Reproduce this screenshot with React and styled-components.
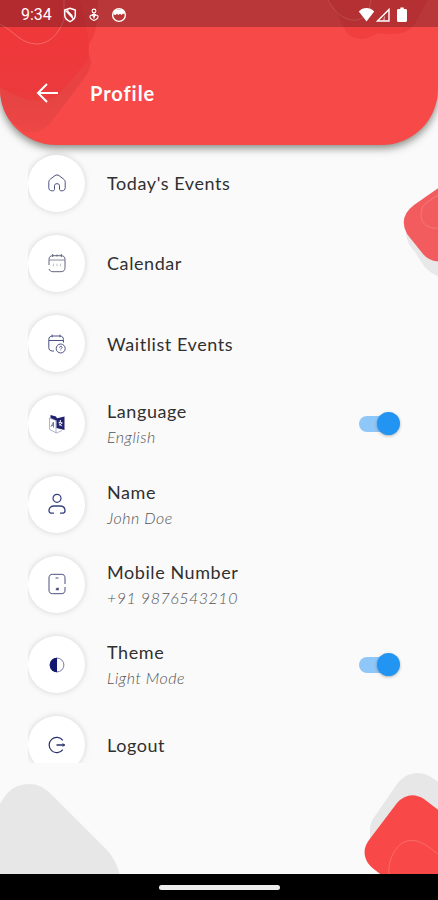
import React from "react";
import styled, { createGlobalStyle } from "styled-components";

const NAVY = "#4a5080";

const HomeIcon = () => (
  <Icon viewBox="0 0 20 20">
    <path d="M7.500 16.300c0 .9-.7 1.500-1.600 1.500h-1C3 17.800 1.800 16.500 1.800 14.700V9.200c0-1.300.5-2.200 1.500-3L8 2.600c1.300-.9 2.700-.9 4 0l4.700 3.600c1 .8 1.500 1.700 1.500 3v5.500c0 1.800-1.200 3.100-3.100 3.100h-1c-.9 0-1.600-.6-1.600-1.500v-3.500c0-1.300-.9-2.100-2.500-2.100s-2.500.8-2.500 2.100z" />
  </Icon>
);

const CalendarIcon = () => (
  <Icon viewBox="0 0 20 20" $color="#62657f">
    <path d="M2 12V6.500C2 4 3.300 2.700 5.800 2.700h8.400C16.700 2.700 18 4 18 6.500v8c0 2.800-1.300 4.200-4 4.200H6c-2.200 0-3.500-1-3.900-2.700M5.700 1v3M10 1.500v2M14.300 1v3" />
    <path d="M2.200 7h15.600" opacity=".75" />
    <path d="M6 12h.8M9.600 12h.8M13.200 12h.8" opacity=".5" strokeWidth="2.500" />
  </Icon>
);

const WaitlistIcon = () => (
  <Icon viewBox="0 0 20 20">
    <path d="M7 17H5.500C3 17 1.800 15.700 1.800 13.300V5.700C1.800 3.300 3 2 5.500 2h7.200c2.500 0 3.700 1.300 3.700 3.700v3M5.200.7v2.600M13 .7v2.600M2 6.500h14.400" />
    <circle cx="13.700" cy="14.500" r="4.500" />
    <path d="M12.500 13.500c0-1.700 2.700-1.500 2.500 0-.1.800-1.300.8-1.300 1.900M13.700 16.700v.3" />
  </Icon>
);

const LanguageIcon = () => (
  <Icon viewBox="0 0 20 20">
    <path d="M2.500 4v11.500l7 3.500 5.500-2.500M2.500 4 9 6.500V19" strokeWidth=".7" stroke="#9295bb" />
    <path d="M3.500 1 9 2.500l1 1.700 7.500-1.700V16L9.500 14V6.500L3.500 4z" fill="#20206d" stroke="none" />
    <path d="M4 12.700 6.500 8v5.500M4.700 11.200l2 .5" stroke="#77799e" />
    <path d="M13.300 6v2M11.600 8.300l4 .7M14.600 9c-.5 1.500-1.300 2-2.700 2M12.200 9.500c.6 1.300 1.700 2 3 2.400" stroke="#fff" />
  </Icon>
);

const PersonIcon = () => (
  <Icon viewBox="0 0 20 20" $color="#35407f">
    <circle cx="10" cy="4.300" r="4" strokeWidth="1.200" />
    <path d="M7 19.200H4.800c-1.800 0-2.800-1-2.800-2.500C2 13.500 4.200 12 7 12h6c2.800 0 5 1.500 5 4.700 0 1.500-1 2.500-2.800 2.500H13" strokeWidth="1.300" />
  </Icon>
);

const PhoneIcon = () => (
  <Icon viewBox="0 0 20 22">
    <path d="M18 14v3c0 2.600-1.200 3.700-3.800 3.700H5.800C3.200 20.700 2 19.600 2 17V5c0-2.600 1.200-3.700 3.800-3.700h8.400C16.800 1.300 18 2.400 18 5v6M8.500 5h3" />
    <path d="M8.800 16.300h2M9.500 15.700h1.500v1.500" strokeWidth="1.700" />
  </Icon>
);

const ThemeIcon = () => (
  <Icon viewBox="0 0 20 20" $color="#777ba5">
    <circle cx="10" cy="10" r="6.900" />
    <path d="M10 2.700a7.300 7.300 0 0 0 0 14.600z" fill="#14186e" stroke="none" />
  </Icon>
);

const LogoutIcon = () => (
  <Icon viewBox="0 0 20 20" $color="#272d6b">
    <path d="M15.800 5.400A7.600 7.600 0 1 0 15.800 14.600" strokeWidth="1.200" />
    <path d="M9.500 10H17.500" strokeWidth="1.500" />
    <path d="m15.500 8.700 2.300 1.300-2.300 1.300" />
  </Icon>
);

const items = [
  { id: "today", title: "Today's Events", icon: HomeIcon },
  { id: "calendar", title: "Calendar", icon: CalendarIcon },
  { id: "waitlist", title: "Waitlist Events", icon: WaitlistIcon },
  { id: "language", title: "Language", value: "English", icon: LanguageIcon, toggle: true },
  { id: "name", title: "Name", value: "John Doe", icon: PersonIcon },
  { id: "mobile", title: "Mobile Number", value: "+91 9876543210", icon: PhoneIcon },
  { id: "theme", title: "Theme", value: "Light Mode", icon: ThemeIcon, toggle: true },
  { id: "logout", title: "Logout", icon: LogoutIcon },
];

const StatusBar = () => (
  <StatusWrapper>
    <Clock>9:34</Clock>
    <StatusIcons>
      <svg width="14" height="16" viewBox="0 0 14 16" fill="none" stroke="#fff">
        <path d="M7 1.200 12.300 3v5c0 3-2.200 5.200-5.300 6.600C3.900 13.200 1.700 11 1.700 8V3z" strokeWidth="1.500" />
        <path d="M2.500 3.300 10.500 12M4.500 2.800c0 3.700 4.500 3 5 7.500" strokeWidth="1.200" />
      </svg>
      <svg width="10" height="14" viewBox="0 0 10 14" fill="none" stroke="#fff" strokeWidth="1.100">
        <circle cx="5" cy="3" r="1.900" />
        <path d="M5 5v5M2.800 6.500h4.400M5 9.500C4.300 7 1.300 6.500 1 8.500c-.2 1.900 2 3.200 4 4 2-.8 4.200-2.100 4-4-.3-2-3.300-1.500-4 1z" />
      </svg>
      <svg width="16" height="16" viewBox="0 0 16 16">
        <circle cx="8" cy="8" r="6.400" fill="none" stroke="#fff" strokeWidth="1.400" />
        <path d="M2.500 7.500V4.800L5 2.500h6l2.500 2.300v2.700l-1.500-1L10.500 8 9 6.800 7.500 8 6 6.700 4.500 8z" fill="#fff" />
      </svg>
    </StatusIcons>
    <Signals width="52" height="16" viewBox="0 0 52 16">
      <path d="M1.800 4.500C6-.1 13-.1 17.200 4.500L9.500 14.500z" fill="#fff" />
      <path d="M20.500 14 32 2.500V14z" fill="none" stroke="#fff" strokeWidth="1.400" />
      <path d="M25.500 13.500 28 8v5.500z" fill="#fff" opacity=".45" />
      <path d="M41.500 2h1.800V.5h3.500V2h1.700c.9 0 1.500.6 1.500 1.500v10c0 .9-.6 1.500-1.500 1.500h-7c-.9 0-1.500-.6-1.500-1.500v-10c0-.9.6-1.500 1.500-1.500z" fill="#fff" />
    </Signals>
  </StatusWrapper>
);

const Switch = () => (
  <Track role="switch" aria-checked="true">
    <Thumb />
  </Track>
);

const MenuItem = ({ item }) => {
  const { title, value, icon: ItemIcon, toggle } = item;

  return (
    <Row>
      <IconCircle>
        <ItemIcon />
      </IconCircle>
      <TextSection>
        <ItemTitle>{title}</ItemTitle>
        {value && <ItemValue>{value}</ItemValue>}
      </TextSection>
      {toggle && <Switch />}
    </Row>
  );
};

const App = () => {
  return (
    <>
      <GlobalStyle />
      <Screen>
        <Backdrop viewBox="0 0 438 874">
          <path d="M406 234Q407 244 415 252L424 266Q432 276 450 280V220z" fill="#e8e8e8" />
          <path d="M450 180 414 205Q398 217 407 234L423 254Q431 264 450 261z" fill="#f35c5e" />
          <path d="M450 190Q430 198 423 206C417 222 426 230 442 228" fill="none" stroke="#f3797a" />
          <path d="M-6 818C3 792 14 784 30 784Q42 784 53 796L106 849Q117 860 121 880H-6z" fill="#e7e7e7" />
          <path d="M370 845V829Q370 822 375 816L397 784C406 772 420 770 431 777L450 790V845z" fill="#e7e7e7" />
          <path d="M450 819 424 799Q409 790 397 803L369 840C360 852 366 864 375 870L388 880H450z" fill="#f94848" />
          <path d="M390 880C385 861 397 845 404 842C418 837 426 845 442 857" fill="none" stroke="#fa6d6a" />
        </Backdrop>
        <Header>
          <HeaderArt viewBox="0 0 438 145">
            <defs>
              <linearGradient id="blob" x1="0" y1="0" x2="0" y2="1">
                <stop offset=".35" stopColor="#ec3639" />
                <stop offset=".75" stopColor="#dd4141" />
                <stop offset="1" stopColor="#e84545" />
              </linearGradient>
            </defs>
            <path d="M0 0H98C98 24 95 38 87 47L91 61Q91 68 86 76L52 121Q42 135 24 132L0 112z" fill="url(#blob)" opacity=".65" />
            <path d="M0 0H79Q94 48 87 61L59 94Q35 110 0 87z" fill="#ee3539" opacity=".6" />
            <path d="M0 24C15 32 20 43 36 44C49 44 58 35 64 20V0" fill="none" stroke="#f5696a" />
            <path d="M328 0C340 12 341 28 350 36Q363 43 378 33Q405 38 415 24L428 0z" fill="#ed393c" opacity=".6" />
            <path d="M328 0C336 16 348 21 357 20Q369 18 371 0" fill="none" stroke="#fa6767" />
          </HeaderArt>
          <StatusBar />
          <TitleBar>
            <BackIcon width="24" height="22" viewBox="0 0 24 22">
              <path d="M22 11H2M11 2 2 11l9 9" />
            </BackIcon>
            <PageTitle>Profile</PageTitle>
          </TitleBar>
        </Header>
        <List>
          {items.map((item) => (
            <MenuItem key={item.id} item={item} />
          ))}
        </List>
        <NavBar>
          <HomeIndicator />
        </NavBar>
      </Screen>
    </>
  );
};

export default App;

const GlobalStyle = createGlobalStyle`
  * {
    box-sizing: border-box;
  }

  body {
    margin: 0;
    font-family: Lato, sans-serif;
  }
`;

const Screen = styled.div`
  position: relative;
  display: flex;
  flex-direction: column;
  width: 438px;
  height: 900px;
  overflow: hidden;
  background: #fafafa;
`;

const Backdrop = styled.svg`
  position: absolute;
  top: 0;
  left: 0;
  width: 438px;
  height: 874px;
`;

const Header = styled.header`
  position: relative;
  flex: none;
  height: 145px;
  border-radius: 0 0 56px 56px;
  background: #f74a48;
  box-shadow: 0 3px 9px rgba(50, 55, 45, 0.6);
`;

const HeaderArt = styled.svg`
  position: absolute;
  inset: 0;
  width: 438px;
  height: 145px;
  border-radius: 0 0 56px 56px;
`;

const StatusWrapper = styled.div`
  position: relative;
  display: flex;
  align-items: center;
  height: 27px;
  padding: 2px 29px 0 21px;
  background: rgba(65, 20, 25, 0.34);
`;

const Clock = styled.span`
  width: 42px;
  color: #fff;
  font: 400 16px Roboto, sans-serif;
`;

const StatusIcons = styled.div`
  display: flex;
  align-items: center;
  gap: 12px;
`;

const Signals = styled.svg`
  margin-left: auto;
`;

const TitleBar = styled.div`
  position: relative;
  display: flex;
  align-items: center;
  gap: 30px;
  height: 64px;
  margin-top: 34px;
  padding-left: 36px;
`;

const BackIcon = styled.svg`
  fill: none;
  stroke: #fff;
  stroke-width: 2;
`;

const PageTitle = styled.h1`
  margin: 0;
  color: #fff;
  font-size: 20px;
  line-height: 24px;
  letter-spacing: 0.95px;
`;

const List = styled.main`
  position: relative;
  height: 618px;
  margin-left: 28px;
  overflow: hidden;
`;

const Row = styled.div`
  display: flex;
  align-items: center;
  height: 80.25px;
  padding-right: 38px;

  &:first-child {
    margin-top: -2px;
  }
`;

const IconCircle = styled.div`
  display: flex;
  flex: none;
  align-items: center;
  justify-content: center;
  width: 57px;
  height: 57px;
  border-radius: 50%;
  background: #fff;
  box-shadow: 0 0 6px rgba(0, 0, 0, 0.16);
`;

const Icon = styled.svg`
  width: 20px;
  height: 22px;
  fill: none;
  stroke: ${({ $color }) => $color || NAVY};
  stroke-width: 1;
`;

const TextSection = styled.div`
  flex: 1;
  margin-left: 22px;
  padding-top: 1px;
`;

const ItemTitle = styled.p`
  margin: 0;
  color: #303030;
  font-size: 18px;
  line-height: 25px;
  letter-spacing: 0.58px;
`;

const ItemValue = styled.p`
  margin: 1px 0 0;
  color: #555;
  font-size: 16px;
  font-style: italic;
  font-weight: 300;
  line-height: 24px;
  letter-spacing: 0.5px;
`;

const Track = styled.div`
  display: flex;
  align-items: center;
  justify-content: flex-end;
  width: 40px;
  height: 16px;
  margin-right: 1px;
  border-radius: 8px;
  background: #8fc7f8;
`;

const Thumb = styled.span`
  flex: none;
  width: 23px;
  height: 23px;
  margin-right: -1px;
  border-radius: 50%;
  background: #2294f1;
  box-shadow: 0 1px 3px rgba(0, 0, 0, 0.3);
`;

const NavBar = styled.footer`
  position: relative;
  display: flex;
  align-items: center;
  justify-content: center;
  height: 26px;
  margin-top: auto;
  background: #000;
`;

const HomeIndicator = styled.span`
  width: 121px;
  height: 5px;
  border-radius: 3px;
  background: #ededed;
`;
